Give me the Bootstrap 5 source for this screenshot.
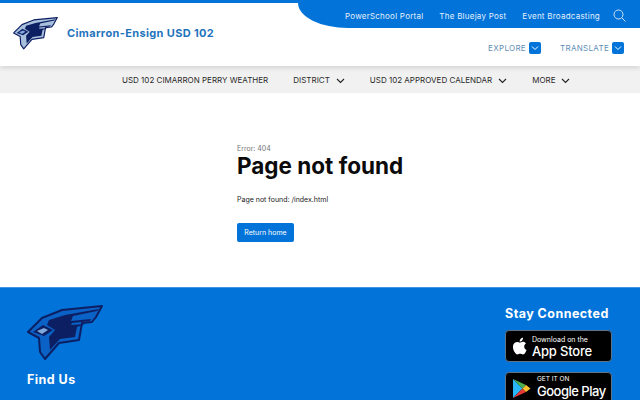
<!DOCTYPE html>
<html lang="en">
<head>
  <meta charset="UTF-8" />
  <title>Cimarron-Ensign USD 102</title>
  <meta name="viewport" content="width=device-width, initial-scale=1">
  <link href="https://cdn.jsdelivr.net/npm/bootstrap@5.3.3/dist/css/bootstrap.min.css" rel="stylesheet">
  <style>
    html, body { overflow: hidden; }
    body { font-family: Inter, "Liberation Sans", sans-serif; color: #212121; }
    a { text-decoration: none; }
    .site-head { height: 66px; border-top: 3px solid #0273d9; position: relative; z-index: 2; box-shadow: 0 2px 5px rgba(0,0,0,.12); background: #fff; }
    .brand-side { padding: 14px 0 0 13px; color: #a9c0dc; }
    .brand-name { color: #1f74bd; font-size: 11px; font-weight: 700; letter-spacing: .35px; margin-left: 9px; }
    .util-side { width: 342px; }
    .blue-tab { height: 25px; background: #0273d9; border-bottom-left-radius: 50px 25px; padding-right: 14px; gap: 16px; font-size: 8px; letter-spacing: .24px; }
    .blue-tab a { color: #e4f0fb; }
    .blue-tab svg { margin-left: -3px; }
    .drop-row { height: 35px; padding: 5px 16px 0 0; gap: 19px; font-size: 8px; letter-spacing: .3px; }
    .drop-row span { color: #5f8fb8; }
    .chev-box { width: 12px; height: 12px; background: #0273d9; border-radius: 2px; margin-left: 3px; }
    .main-nav { height: 27px; background: #f1f1f1; font-size: 8px; padding: 1px 0 0 122px; gap: 25px; }
    .main-nav a { color: #2b2b2b; }
    .main-nav svg { margin-left: 6px; }
    .page-body { height: 194px; padding: 51px 0 0 237px; }
    .err-code { font-size: 7px; color: #757575; line-height: 9px; }
    .err-title { font-size: 22.500px; font-weight: 700; color: #0b0b0b; line-height: 26px; margin: 0; }
    .err-text { font-size: 7px; color: #222; margin: 16px 0 0; line-height: 10px; }
    .btn-home { background: #0273d9; color: #fff; font-size: 7px; border-radius: 2px; width: 57px; height: 19px; padding: 0; line-height: 19px; margin-top: 18px; border: 0; display: block; }
    .site-foot { height: 200px; background: #0273d9; border-top: 1px solid #3f95e2; padding: 17px 28px 0 27px; color: #fff; }
    .foot-logo { color: #0a62c6; }
    .foot-title { font-size: 12.500px; font-weight: 700; letter-spacing: .45px; line-height: 16px; margin: 0; }
    .find-us { margin-top: 11px; }
    .store-col { width: 107px; padding-top: 2px; }
    .store-col .foot-title { line-height: 14px; margin-bottom: 9px; }
    .store-badge { height: 32px; background: #000; border: 1px solid #5d7488; border-radius: 4px; color: #fff; margin-bottom: 10px; padding-left: 6px; white-space: nowrap; }
    .store-small { font-size: 7px; line-height: 9px; }
    .store-big { font-size: 13px; line-height: 14px; font-weight: 500; letter-spacing: -.2px; }
    .play-badge { padding-bottom: 3px; }
    .play-small { font-size: 6.500px; }
    .play-big { letter-spacing: -.5px; }
    .apple-svg { margin-right: 5px; }
    .play-svg { margin-right: 6px; margin-top: 3px; }
  </style>
</head>
<body>
  <svg width="0" height="0" class="d-block position-absolute">
    <defs>
      <symbol id="jay" viewBox="0 0 76 56">
        <path d="M1 27 L15 13 L35 5 L75 1 L69 12 L65 17 L55 18 L52 35 L32 38 L18 54 L13 47 L12 33 Z" fill="currentColor" stroke="#0d1f63" stroke-width="2" stroke-linejoin="round"/>
        <path d="M22 15 L38 10 L72 4 L70 6 L46 11 L44 16 L64 14 L63 16 L45 18 L44 20 L58 19 L50 22 L48 32 L33 34 L23 45 L22 32 L28 25 L20 20 Z" fill="#0d1f63"/>
        <path d="M6 27 L16 20 L26 25 L17 31 Z" fill="#0d1f63"/>
        <path d="M10 26 L17 23 L21 25 L15 29 Z" fill="#7fa8dc"/>
      </symbol>
    </defs>
  </svg>

  <header class="site-head d-flex justify-content-between">
    <a href="#" class="brand-side d-flex align-items-center align-self-start">
      <svg width="45" height="33"><use href="#jay"/></svg>
      <span class="brand-name">Cimarron-Ensign USD 102</span>
    </a>
    <div class="util-side">
      <div class="blue-tab d-flex align-items-center justify-content-end">
        <a href="#">PowerSchool Portal</a>
        <a href="#">The Bluejay Post</a>
        <a href="#">Event Broadcasting</a>
        <svg width="13" height="13" viewBox="0 0 13 13" fill="none" stroke="#cfe3f7" stroke-width="1"><circle cx="5.500" cy="5.500" r="4.500"/><path d="M9 9l3.500 3.500"/></svg>
      </div>
      <div class="drop-row d-flex align-items-center justify-content-end">
        <div class="d-flex align-items-center"><span>EXPLORE</span><div class="chev-box d-flex align-items-center justify-content-center"><svg width="8" height="6" viewBox="0 0 8 6" fill="none" stroke="#fff" stroke-width="1"><path d="M1 1.500l3 3 3-3"/></svg></div></div>
        <div class="d-flex align-items-center"><span>TRANSLATE</span><div class="chev-box d-flex align-items-center justify-content-center"><svg width="8" height="6" viewBox="0 0 8 6" fill="none" stroke="#fff" stroke-width="1"><path d="M1 1.500l3 3 3-3"/></svg></div></div>
      </div>
    </div>
  </header>

  <nav class="main-nav d-flex align-items-center">
    <a href="#">USD 102 CIMARRON PERRY WEATHER</a>
    <a href="#">DISTRICT<svg width="9" height="6" viewBox="0 0 9 6" fill="none" stroke="#222" stroke-width="1.100"><path d="M1 1l3.500 3.500L8 1"/></svg></a>
    <a href="#">USD 102 APPROVED CALENDAR<svg width="9" height="6" viewBox="0 0 9 6" fill="none" stroke="#222" stroke-width="1.100"><path d="M1 1l3.500 3.500L8 1"/></svg></a>
    <a href="#">MORE<svg width="9" height="6" viewBox="0 0 9 6" fill="none" stroke="#222" stroke-width="1.100"><path d="M1 1l3.500 3.500L8 1"/></svg></a>
  </nav>

  <main class="page-body">
    <div class="err-code">Error: 404</div>
    <h1 class="err-title">Page not found</h1>
    <p class="err-text">Page not found: /index.html</p>
    <a href="#" class="btn btn-home">Return home</a>
  </main>

  <footer class="site-foot d-flex justify-content-between">
    <div>
      <svg width="76" height="56" class="d-block foot-logo"><use href="#jay"/></svg>
      <h2 class="foot-title find-us">Find Us</h2>
    </div>
    <div class="store-col">
      <h2 class="foot-title">Stay Connected</h2>
      <a href="#" class="store-badge d-flex align-items-center">
        <svg width="15" height="18" viewBox="0 0 17 20" fill="#fff" class="apple-svg"><path d="M13.800 10.600c0-2.300 1.900-3.400 2-3.500-1.100-1.600-2.800-1.800-3.400-1.800-1.400-.1-2.800.9-3.500.9s-1.900-.9-3.100-.8C4.200 5.400 2.700 6.300 1.900 7.700c-1.700 2.900-.4 7.200 1.200 9.500.8 1.100 1.700 2.400 3 2.400 1.200 0 1.600-.8 3.100-.8s1.900.8 3.100.8 2.100-1.100 2.900-2.300c.9-1.300 1.300-2.600 1.300-2.700-.1 0-2.700-1-2.700-4zM11.500 3.700c.6-.8 1.100-1.900 1-3-.9 0-2.100.6-2.800 1.400-.6.700-1.100 1.800-1 2.900 1.100.1 2.100-.5 2.800-1.300z"/></svg>
        <div>
          <div class="store-small">Download on the</div>
          <div class="store-big">App Store</div>
        </div>
      </a>
      <a href="#" class="store-badge play-badge d-flex align-items-center">
        <svg width="19" height="21" viewBox="0 0 19 21" class="play-svg"><path d="M1 1v19l9.500-9.500z" fill="#29b6f6"/><path d="M1 1l9.500 9.500L14 7z" fill="#4caf50"/><path d="M1 20l9.500-9.500L14 14z" fill="#e53935"/><path d="M14 7l-3.500 3.500L14 14l4.500-3.500z" fill="#fbc02d"/></svg>
        <div>
          <div class="store-small play-small">GET IT ON</div>
          <div class="store-big play-big">Google Play</div>
        </div>
      </a>
    </div>
  </footer>
</body>
</html>
